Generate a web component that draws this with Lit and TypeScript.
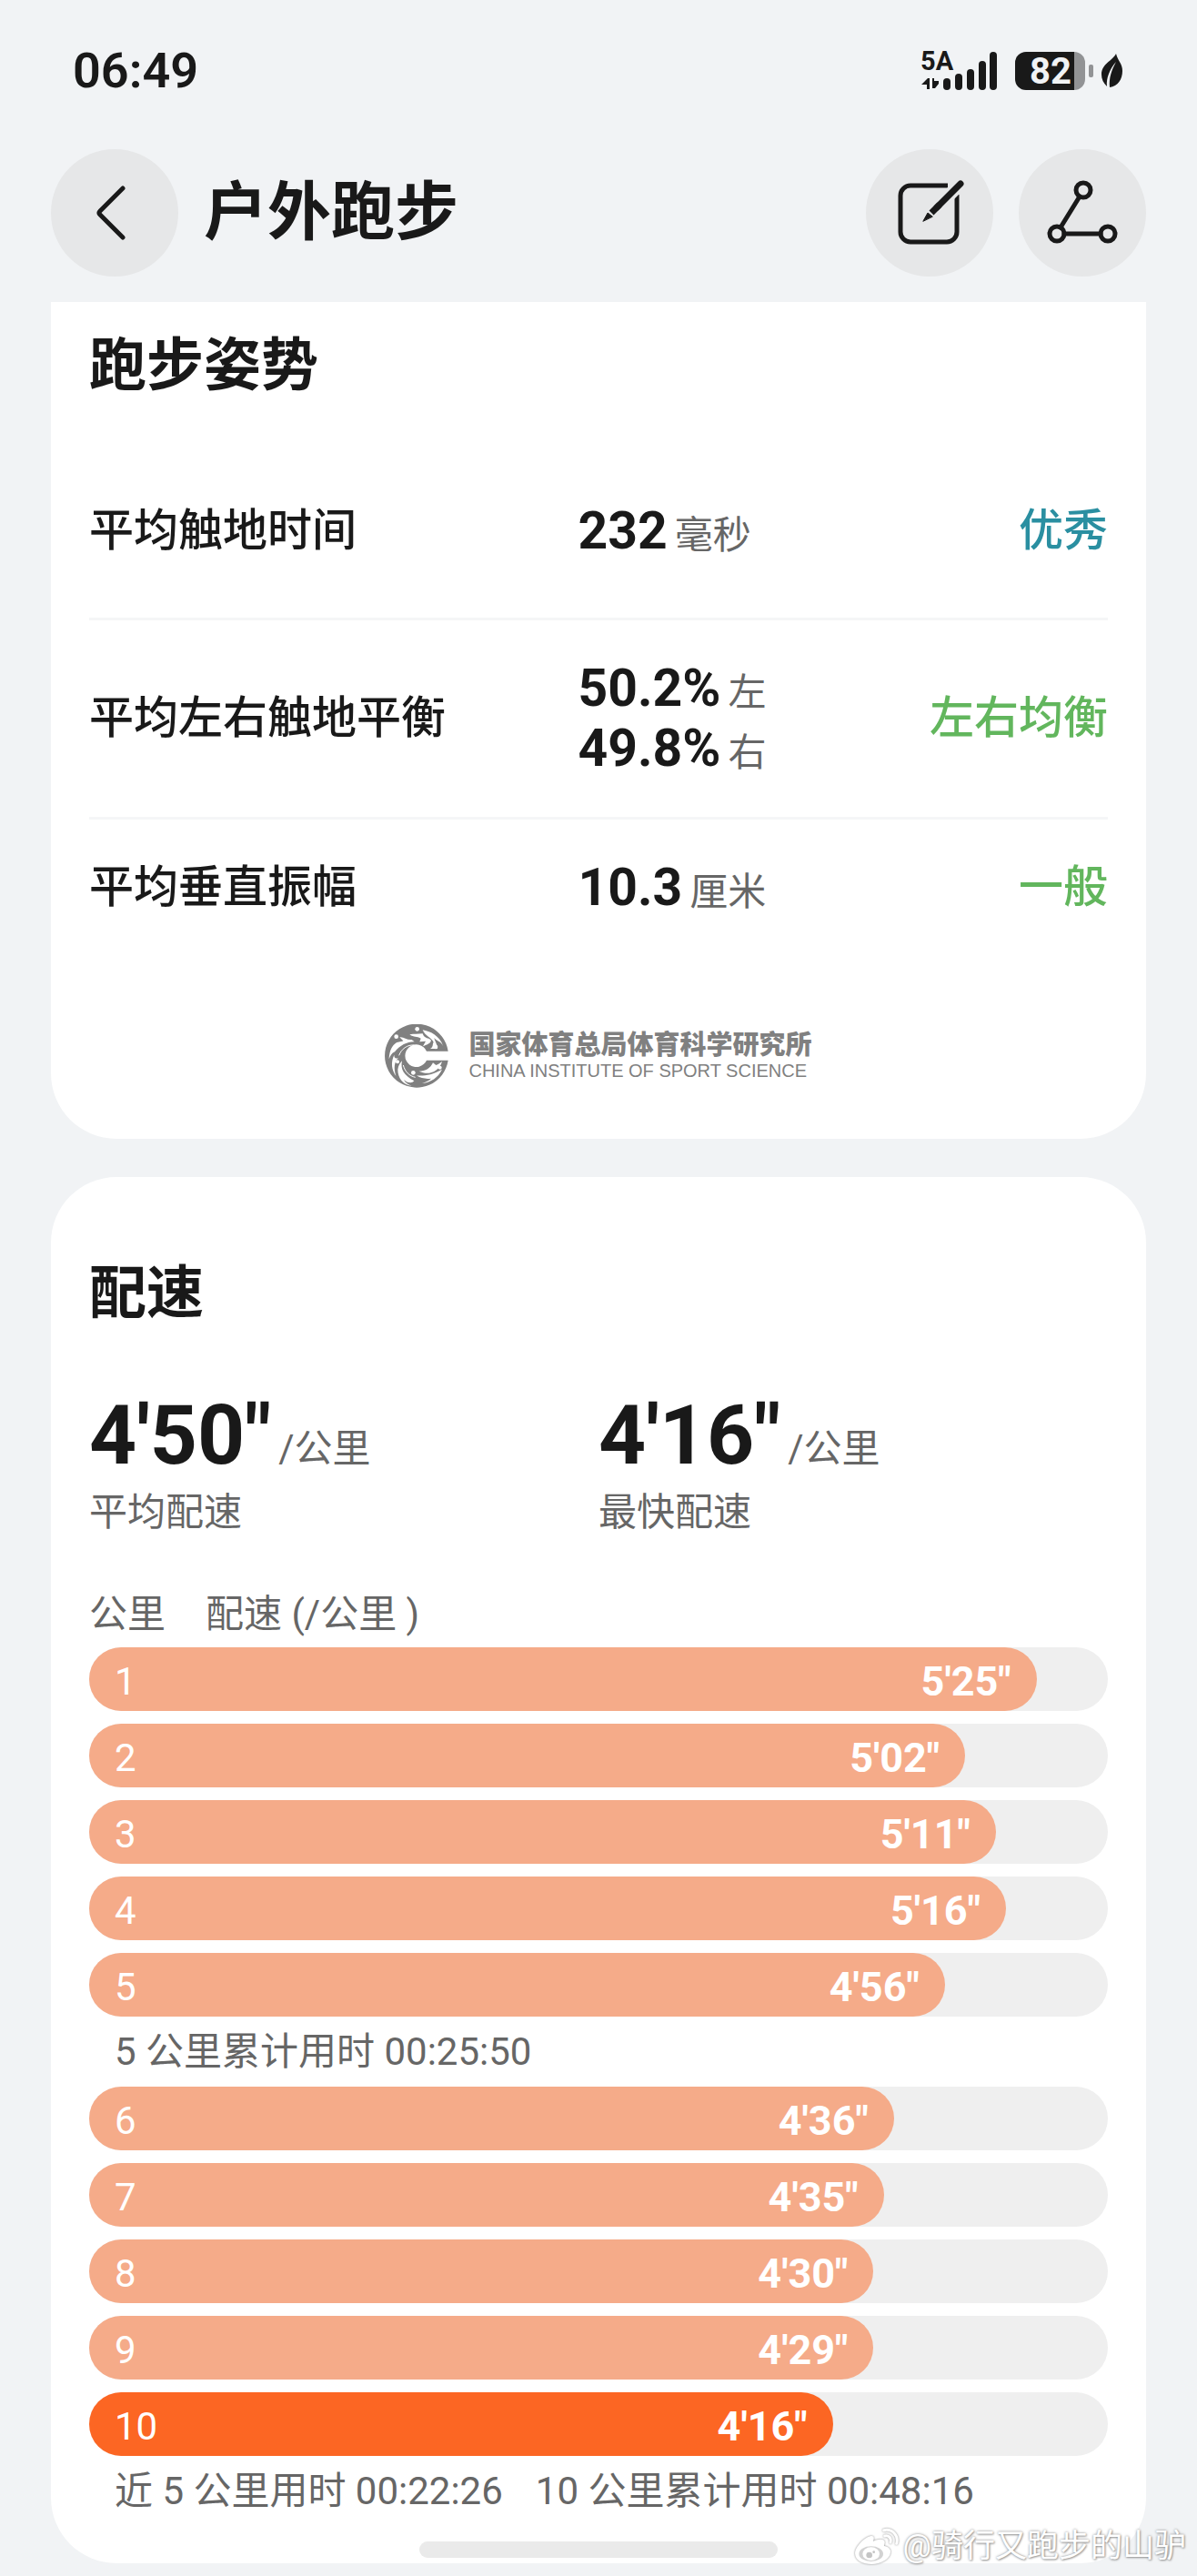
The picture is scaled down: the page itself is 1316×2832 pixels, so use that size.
import { LitElement, html, svg, css } from 'lit';
import { customElement, property } from 'lit/decorators.js';
import { classMap } from 'lit/directives/class-map.js';
import { styleMap } from 'lit/directives/style-map.js';

interface Metric {
  label: string;
  values: { value: string; unit: string }[];
  rating: string;
  tone: 'teal' | 'green';
}

interface Split {
  km: number;
  pace: string;
  percent: number;
  note?: string[];
}

const METRICS: Metric[] = [
  { label: '平均触地时间', values: [{ value: '232', unit: '毫秒' }], rating: '优秀', tone: 'teal' },
  {
    label: '平均左右触地平衡',
    values: [{ value: '50.2%', unit: '左' }, { value: '49.8%', unit: '右' }],
    rating: '左右均衡',
    tone: 'green',
  },
  { label: '平均垂直振幅', values: [{ value: '10.3', unit: '厘米' }], rating: '一般', tone: 'green' },
];

const SUMMARY = [
  { value: `4'50"`, label: '平均配速' },
  { value: `4'16"`, label: '最快配速' },
];

const SPLITS: Split[] = [
  { km: 1, pace: `5'25"`, percent: 93 },
  { km: 2, pace: `5'02"`, percent: 86 },
  { km: 3, pace: `5'11"`, percent: 89 },
  { km: 4, pace: `5'16"`, percent: 90 },
  { km: 5, pace: `4'56"`, percent: 84, note: ['5 公里累计用时 00:25:50'] },
  { km: 6, pace: `4'36"`, percent: 79 },
  { km: 7, pace: `4'35"`, percent: 78 },
  { km: 8, pace: `4'30"`, percent: 77 },
  { km: 9, pace: `4'29"`, percent: 77 },
  { km: 10, pace: `4'16"`, percent: 73, note: ['近 5 公里用时 00:22:26', '10 公里累计用时 00:48:16'] },
];

@customElement('status-bar')
export class StatusBar extends LitElement {
  static styles = css`
    :host {
      display: flex;
      align-items: center;
      justify-content: space-between;
      padding: 44px 82px 52px 80px;
      line-height: 68px;
    }

    .time {
      font-size: 54px;
      font-weight: 600;
    }

    .icons {
      display: flex;
      align-items: center;
      gap: 18px;
    }

    svg {
      display: block;
      fill: #191919;
    }

    .battery-group {
      display: flex;
      align-items: center;
      gap: 8px;
    }

    text {
      font-family: Roboto, sans-serif;
      font-weight: 700;
    }
  `;

  render() {
    return html`
      <time class="time">06:49</time>
      <div class="icons">
        <svg width="86" height="64" viewBox="0 -10 86 64" role="img" aria-label="5A 信号">
          <text x="1" y="21" font-size="29">5A</text>
          <path d="M2 37l7-7h2v12H8v-5zM14 30h2v3h5v3l-4 5h-3z" />
          ${[[26, 30], [39, 25], [52, 20], [65, 11], [77, 1]].map(
            ([x, y]) => svg`<rect x=${x} y=${y} width="8" height=${43 - y} rx="4" />`
          )}
        </svg>
        <div class="battery-group">
          <svg width="88" height="64" viewBox="0 -10 88 64" role="img" aria-label="电量 82%">
            <path fill="#929395" d="M66 1a12 12 0 0 1 12 12v18a12 12 0 0 1-12 12z" />
            <path d="M13 1h53v42H13A12 12 0 0 1 1 31V13A12 12 0 0 1 13 1z" />
            <rect x="82" y="15" width="5" height="14" rx="2" fill="#929395" />
            <text x="17" y="36" font-size="40" fill="#f1f3f5">82</text>
          </svg>
          <svg width="23" height="38" viewBox="0 0 23 38" role="img" aria-label="省电模式">
            <path
              d="M16 0C12 8 0 11 0 23c0 5 2 9 6 13C5 27 9 17 16 9 11 18 8 27 9 37c9-1 14-9 14-18 0-8-5-11-7-19z"
            />
          </svg>
        </div>
      </div>
    `;
  }
}

@customElement('page-header')
export class PageHeader extends LitElement {
  static styles = css`
    :host {
      display: flex;
      align-items: center;
      gap: 28px;
      padding: 0 56px 28px;
    }

    h1 {
      flex: 1;
      margin: 0;
      font-size: 70px;
      font-weight: 700;
      line-height: 92px;
    }

    button {
      display: grid;
      place-items: center;
      width: 140px;
      height: 140px;
      padding: 0;
      border: 0;
      border-radius: 50%;
      background: #e6e7e8;
      cursor: pointer;
    }

    svg {
      width: 84px;
      height: 84px;
      fill: none;
      stroke: #191919;
      stroke-width: 5;
      stroke-linecap: round;
      stroke-linejoin: round;
    }
  `;

  render() {
    return html`
      <button aria-label="返回">
        <svg viewBox="0 0 84 84"><path d="M51 15L26 40q-2 2 0 4l25 25" /></svg>
      </button>
      <h1>户外跑步</h1>
      <button aria-label="编辑">
        <svg viewBox="0 0 84 84">
          <path
            stroke-linecap="butt"
            d="M62 12H21A11 11 0 0 0 10 23V63A11 11 0 0 0 21 74H61A11 11 0 0 0 72 63V22"
          />
          <path stroke="#e6e7e8" stroke-width="14" stroke-linecap="butt" d="M40 46L79 7" />
          <path stroke-width="7" d="M76 10L50 36" />
          <path stroke-width="7" stroke-linecap="butt" d="M53 33L44 42" />
          <path fill="#191919" stroke-width="1" d="M35 51l5-9 5 4z" />
        </svg>
      </button>
      <button aria-label="轨迹分享">
        <svg viewBox="0 0 84 84">
          <circle cx="43" cy="17" r="8" />
          <circle cx="14" cy="65" r="8" />
          <circle cx="70" cy="65" r="8" />
          <path d="M39 24L18 58M22 65H62" />
        </svg>
      </button>
    `;
  }
}

@customElement('posture-card')
export class PostureCard extends LitElement {
  static styles = css`
    :host {
      display: block;
      padding: 24px 42px 56px;
      border-radius: 0 0 72px 72px;
      background: #fff;
    }

    h2 {
      margin: 0 0 36px;
      font-size: 63px;
      font-weight: 700;
      line-height: 92px;
    }

    table {
      width: 100%;
      border-collapse: collapse;
      font-size: 49px;
      font-weight: 500;
      line-height: 66px;
    }

    th,
    td {
      padding: 42px 0;
      text-align: left;
      font-weight: 500;
    }

    th {
      width: 48%;
    }

    tr:first-child > * {
      padding: 67px 0 62px;
    }

    tr + tr > * {
      border-top: 3px solid #f5f6f7;
    }

    .reading {
      display: flex;
      align-items: baseline;
      gap: 8px;
      height: 66px;
    }

    .value {
      font-size: 57px;
      font-weight: 700;
    }

    .unit {
      font-size: 42px;
      font-weight: 400;
      color: #666;
    }

    .rating {
      text-align: right;
    }

    .teal {
      color: #2a8fa1;
    }

    .green {
      color: #62b65d;
    }

    .credit {
      display: flex;
      align-items: center;
      justify-content: center;
      gap: 22px;
      margin-top: 75px;
      color: #808080;
    }

    .credit svg {
      flex: none;
      width: 70px;
      height: 70px;
    }

    .credit p {
      margin: 0;
    }

    .cn {
      font-size: 29px;
      font-weight: 900;
      line-height: 32px;
    }

    .en {
      font-family: 'Liberation Sans', Arial, sans-serif;
      font-size: 20px;
      line-height: 24px;
    }
  `;

  render() {
    return html`
      <h2>跑步姿势</h2>
      <table>
        ${METRICS.map(
          (m) => html`
            <tr>
              <th scope="row">${m.label}</th>
              <td>
                ${m.values.map(
                  (v) => html`
                    <div class="reading">
                      <span class="value">${v.value}</span><span class="unit">${v.unit}</span>
                    </div>
                  `
                )}
              </td>
              <td class="rating ${m.tone}">${m.rating}</td>
            </tr>
          `
        )}
      </table>
      <div class="credit">
        <svg viewBox="15 15 210 210" aria-hidden="true">
          <path
            fill="currentColor"
            d="M224 104A105 105 0 1 0 224 134H153A37 37 0 1 1 153 104z"
          />
          <g fill="#fff">
            <path
              d="M29 130C30 108 36 90 48 80C58 72 66 74 76 70L64 58C78 56 88 68 104 66L113 73C90 72 66 84 48 106C38 110 33 120 29 130z"
            />
            <path
              d="M97 49C112 60 120 54 134 62L130 73L150 71L141 88C152 82 166 80 168 68C158 58 146 64 140 46C124 48 112 46 97 49z"
            />
            <path
              d="M140 34C164 38 196 52 208 88C200 70 184 70 178 60C182 76 190 84 188 96H164C176 92 172 78 176 74C168 58 148 54 140 34z"
            />
            <path
              d="M72 136C66 164 78 184 112 202C104 212 88 208 78 198C82 208 92 214 104 218C74 214 58 192 58 164C60 150 66 142 72 136z"
            />
            <path
              d="M46 116C34 142 38 166 52 186C44 160 46 140 60 126C50 130 46 126 46 116z"
            />
            <path
              d="M120 184C142 186 170 184 204 164C190 192 168 206 138 210C154 204 162 200 168 194C152 196 134 194 120 184z"
            />
            <path
              d="M128 170C150 170 166 160 174 142L184 150C192 148 198 142 204 138C198 160 182 172 162 176C150 178 138 174 128 170z"
            />
            <circle cx="122" cy="31" r="7" />
            <circle cx="53" cy="56" r="7" />
            <circle cx="183" cy="90" r="7" />
            <circle cx="57" cy="139" r="6" />
            <circle cx="109" cy="175" r="7" />
            <circle cx="197" cy="158" r="6" />
          </g>
          <g fill="none" stroke="#fff" stroke-width="3">
            <path d="M62 118C70 96 90 82 112 84" />
            <path d="M76 150C82 172 96 186 116 190" />
          </g>
        </svg>
        <div>
          <p class="cn">国家体育总局体育科学研究所</p>
          <p class="en">CHINA INSTITUTE OF SPORT SCIENCE</p>
        </div>
      </div>
    `;
  }
}

@customElement('split-bar')
export class SplitBar extends LitElement {
  static styles = css`
    :host {
      display: block;
      border-radius: 35px;
      background: #efefef;
    }

    .fill {
      display: flex;
      align-items: center;
      justify-content: space-between;
      box-sizing: border-box;
      height: 70px;
      padding: 4px 28px 0;
      border-radius: 35px;
      background: #f5ab89;
      color: #fff;
      font-size: 42px;
    }

    .best {
      background: #fc6623;
    }

    .pace {
      font-size: 45px;
      font-weight: 700;
    }
  `;

  @property({ type: Number }) km = 0;
  @property() pace = '';
  @property({ type: Number }) percent = 0;
  @property({ type: Boolean }) best = false;

  render() {
    return html`
      <div
        class=${classMap({ fill: true, best: this.best })}
        style=${styleMap({ width: `${this.percent}%` })}
      >
        <span>${this.km}</span><span class="pace">${this.pace}</span>
      </div>
    `;
  }
}

@customElement('pace-card')
export class PaceCard extends LitElement {
  static styles = css`
    :host {
      display: block;
      padding: 82px 42px 55px;
      border-radius: 72px;
      background: #fff;
      color: #666;
      font-size: 42px;
    }

    h2 {
      margin: 0 0 60px;
      color: #191919;
      font-size: 63px;
      font-weight: 700;
      line-height: 92px;
    }

    .summary {
      display: grid;
      grid-template-columns: 1fr 1fr;
      margin-bottom: 49px;
    }

    .summary p {
      margin: 0;
      line-height: 70px;
    }

    .summary .figure {
      display: flex;
      align-items: flex-end;
      gap: 8px;
      height: 100px;
    }

    .value {
      color: #191919;
      font-size: 91px;
      font-weight: 700;
      line-height: 100px;
    }

    .columns {
      display: flex;
      gap: 44px;
      margin-bottom: 8px;
      line-height: 56px;
    }

    ol {
      display: flex;
      flex-direction: column;
      gap: 14px;
      margin: 0;
      padding: 0;
      list-style: none;
    }

    .note {
      display: flex;
      gap: 36px;
      margin-top: 14px;
      padding-left: 28px;
      line-height: 49px;
    }
  `;

  render() {
    const best = SPLITS[SPLITS.length - 1].km;
    return html`
      <h2>配速</h2>
      <div class="summary">
        ${SUMMARY.map(
          (s) => html`
            <div>
              <p class="figure"><span class="value">${s.value}</span><span>/公里</span></p>
              <p>${s.label}</p>
            </div>
          `
        )}
      </div>
      <div class="columns"><span>公里</span><span>配速 (/公里 )</span></div>
      <ol>
        ${SPLITS.map(
          (s) => html`
            <li>
              <split-bar
                .km=${s.km}
                .pace=${s.pace}
                .percent=${s.percent}
                .best=${s.km === best}
              ></split-bar>
              ${s.note
                ? html`<div class="note">${s.note.map((n) => html`<span>${n}</span>`)}</div>`
                : null}
            </li>
          `
        )}
      </ol>
    `;
  }
}

@customElement('app-root')
export class AppRoot extends LitElement {
  static styles = css`
    :host {
      display: block;
      position: relative;
      padding-bottom: 14px;
      background: #f1f3f5;
      color: #191919;
      font-family: Roboto, 'Noto Sans CJK SC', sans-serif;
    }

    main {
      display: flex;
      flex-direction: column;
      gap: 42px;
      padding: 0 56px;
    }

    .home-indicator {
      position: absolute;
      left: 35%;
      right: 35%;
      bottom: 20px;
      height: 18px;
      border-radius: 9px;
      background: #eaeaea;
    }

    .watermark {
      position: absolute;
      right: 12px;
      bottom: 8px;
      display: flex;
      align-items: center;
      gap: 4px;
      color: #fff;
      font-size: 35px;
      line-height: 48px;
      text-shadow: 0 0 3px #888, 1px 1px 2px #aaa;
    }

    .watermark svg {
      width: 50px;
      height: 42px;
      filter: drop-shadow(0 0 1px #888);
    }
  `;

  render() {
    return html`
      <status-bar></status-bar>
      <page-header></page-header>
      <main>
        <posture-card></posture-card>
        <pace-card></pace-card>
      </main>
      <div class="home-indicator"></div>
      <div class="watermark">
        <svg viewBox="0 0 150 126" aria-hidden="true">
          <path
            fill="#fff"
            d="M3 84C3 62 36 30 56 27C68 26 66 36 63 44C76 38 98 34 101 46C102 52 98 56 99 60C112 62 122 70 120 82C118 104 88 120 58 120C28 120 3 108 3 84z"
          />
          <ellipse cx="56" cy="86" rx="40" ry="25" fill="#d2d2d2" />
          <ellipse cx="56" cy="86" rx="28" ry="22" fill="#fff" />
          <circle cx="50" cy="90" r="10" fill="#c4c4c4" />
          <circle cx="65" cy="80" r="4" fill="#c4c4c4" />
          <g fill="none" stroke="#fff" stroke-width="9" stroke-linecap="round">
            <path d="M98 8C126 2 148 26 140 52" />
            <path d="M101 27C114 24 124 34 120 48" />
          </g>
        </svg>
        <span>@骑行又跑步的山驴</span>
      </div>
    `;
  }
}
